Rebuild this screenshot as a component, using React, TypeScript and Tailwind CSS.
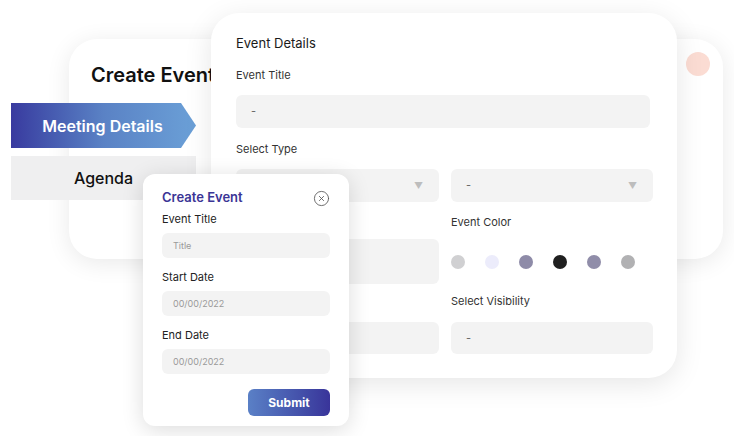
import { CircleX } from 'lucide-react';

const font = { fontFamily: 'Inter, "Noto Sans", sans-serif' };

const dots = ['#d0d0d2', '#ececfb', '#8e8ba8', '#1f1f1f', '#908da9', '#b1b1b3'];

function Field({ text, tall, caret }: { text?: string; tall?: boolean; caret?: boolean }) {
  return (
    <div
      className={`flex items-center justify-between rounded-md bg-[#f3f3f3] pl-[15px] pr-[16px] ${tall ? 'h-[45px]' : 'h-[33px]'}`}
    >
      <span className="text-[11px] text-[#666]">{text}</span>
      {caret && <span className="text-[9px] leading-none text-[#bdbdbd]">▼</span>}
    </div>
  );
}

function SmallInput({ text }: { text: string }) {
  return (
    <div className="mt-[6px] flex h-[25px] items-center rounded-md bg-[#f3f3f3] pl-[11px]">
      <span className="text-[9px] text-[#9a9a9a]">{text}</span>
    </div>
  );
}

function App() {
  return (
    <div className="relative h-[436px] w-[734px] overflow-hidden bg-white text-[#222]" style={font}>
      {/* back card */}
      <div className="absolute left-[69px] top-[39px] h-[220px] w-[654px] rounded-[28px] bg-white shadow-[0_4px_24px_rgba(0,0,0,0.09)]">
        <h1 className="pl-[22px] pt-[22px] text-[20px] font-semibold leading-[28px] text-[#111]">Create Event</h1>
        <div className="absolute right-[13px] top-[13px] h-[24px] w-[24px] rounded-full bg-[#fbdcd3]" />
      </div>

      {/* side tabs */}
      <div className="absolute left-[11px] top-[103px] flex w-[185px] flex-col gap-[8px]">
        <div
          className="flex h-[45px] items-center justify-center bg-gradient-to-r from-[#393a9f] via-[#5a82c5] to-[#6ba0d7] pr-[2px] text-[16px] font-semibold text-white"
          style={{ clipPath: 'polygon(0 0, 170px 0, 185px 50%, 170px 100%, 0 100%)' }}
        >
          Meeting Details
        </div>
        <div className="flex h-[44px] items-center justify-center bg-[#efeff0] text-[16px] font-medium text-[#111]">
          Agenda
        </div>
      </div>

      {/* event details card */}
      <div className="absolute left-[211px] top-[13px] h-[365px] w-[466px] rounded-[28px] bg-white px-[25px] pt-[20px] shadow-[0_6px_28px_rgba(0,0,0,0.1)]">
        <p className="text-[13px] leading-[20px] text-[#1a1a1a]">Event Details</p>
        <p className="mt-[14px] text-[11px] leading-[16px] text-[#333]">Event Title</p>
        <div className="mt-[12px] w-[414px]">
          <Field text="-" />
        </div>
        <p className="mt-[13px] text-[11px] leading-[16px] text-[#333]">Select Type</p>
        <div className="mt-[12px] grid w-[417px] grid-cols-[203px_202px] gap-x-[12px]">
          <Field caret />
          <Field text="-" caret />
        </div>
        <div className="mt-[12px] grid w-[417px] grid-cols-[203px_202px] gap-x-[12px] gap-y-[9px]">
          <div>
            <div className="h-[16px]" />
            <div className="mt-[9px]">
              <Field tall />
            </div>
          </div>
          <div>
            <p className="text-[11px] leading-[16px] text-[#333]">Event Color</p>
            <div className="mt-[25px] flex gap-[20px]">
              {dots.map((c) => (
                <span key={c} className="h-[14px] w-[14px] rounded-full" style={{ backgroundColor: c }} />
              ))}
            </div>
          </div>
          <div>
            <div className="h-[16px]" />
            <div className="mt-[13px] h-[32px] rounded-md bg-[#f3f3f3]" />
          </div>
          <div>
            <p className="text-[11px] leading-[16px] text-[#333]">Select Visibility</p>
            <div className="mt-[13px] flex h-[32px] items-center rounded-md bg-[#f3f3f3] pl-[15px]">
              <span className="text-[11px] text-[#666]">-</span>
            </div>
          </div>
        </div>
      </div>

      {/* create event popup */}
      <div className="absolute left-[143px] top-[174px] flex h-[252px] w-[206px] flex-col rounded-[12px] bg-white pl-[19px] pr-[19px] pt-[15px] shadow-[0_4px_22px_rgba(0,0,0,0.14)]">
        <div className="flex h-[18px] items-center justify-between">
          <span className="text-[13px] font-semibold text-[#3b3596]">Create Event</span>
          <CircleX className="h-[17px] w-[17px] text-[#555]" strokeWidth={1.2} />
        </div>
        <p className="mt-[4px] text-[11px] leading-[16px]">Event Title</p>
        <SmallInput text="Title" />
        <p className="mt-[11px] text-[11px] leading-[16px]">Start Date</p>
        <SmallInput text="00/00/2022" />
        <p className="mt-[11px] text-[11px] leading-[16px]">End Date</p>
        <SmallInput text="00/00/2022" />
        <button className="mt-[15px] h-[27px] w-[82px] self-end rounded-md bg-gradient-to-r from-[#5a80c6] to-[#39349a] text-[12px] font-bold text-white">
          Submit
        </button>
      </div>
    </div>
  );
}

export default App;
